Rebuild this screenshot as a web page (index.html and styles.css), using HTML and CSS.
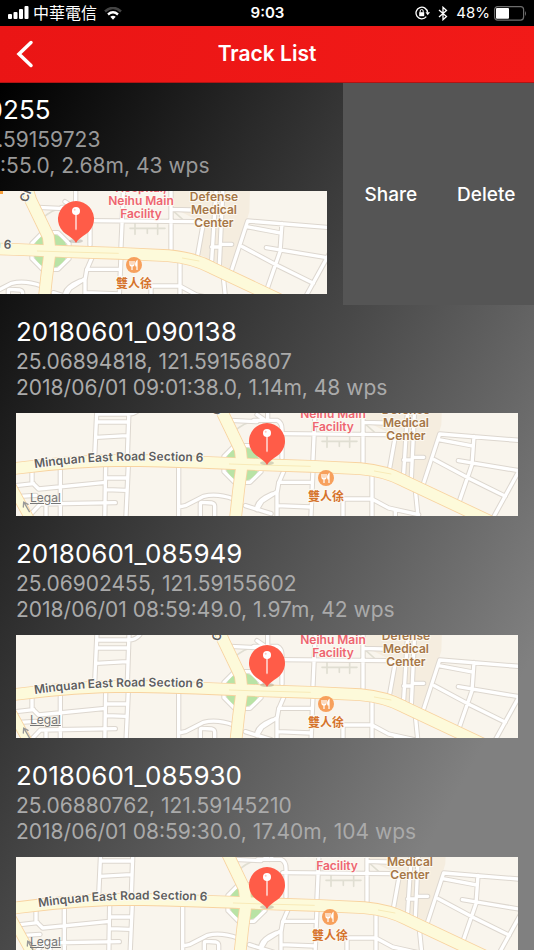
FILE: index.html
```html
<!DOCTYPE html>
<html lang="en">
<head>
<meta charset="utf-8">
<meta name="viewport" content="width=device-width, initial-scale=1">
<title>Track List</title>
<link rel="stylesheet" href="styles.css">
</head>
<body>
<svg class="defs" aria-hidden="true">
  <defs>
    <g id="roads-left">
      <path d="M291 0L283 172M387 0L381 170M384 195L376 370M291 43H385Q405 43 418 28M291 67H385M287 113L380 108M95 215V248L115 268L315 248M30 260L100 252M180 210V370M316 200L313 370M318 235H382M318 270L378 272M57 290L107 287M85 350L120 313L345 309M137 315V370M535 200V370M535 322L555 318L610 290Q650 280 700 298M600 370V312Q600 308 605 308L635 310Q643 312 643 320V370M690 62L770 66M735 318L812 342M770 320Q775 300 815 283"/>
    </g>
    <g id="roads-right">
      <path d="M-20 62H50Q65 68 65 90V175M22 0V60M-10 45L15 62M55 102L380 105L405 114M166 0L158 180M158 210L151 370M308 0V188M308 68L370 70M405 110L388 205M445 -20L430 222M465 -20L453 235M430 181H455M458 173H490M490 250L538 103L800 124M535 120L637 139M641 110L635 195L598 302M522 180L630 238L735 290M594 183L775 213M800 170L690 370M465 270L475 370M335 220V370M240 298H335L385 325L475 345M405 330V370M248 298V370M70 215L55 250L50 280V370M55 248H150M50 276L5 305L-10 330M50 318L152 322"/>
    </g>
    <g id="main-roads">
      <path d="M610 -32L620 0L673 110L678 155L668 230L657 330"/>
      <path d="M-30 170L0 166Q180 142 338 142Q560 147 733 155L883 160L1033 167Q1110 174 1163 203L1470 348"/>
    </g>
    <g id="city">
      <g transform="scale(.33333)">
        <path class="campus" d="M1041 -60H1279L1276 35L1223 210L1118 160L1138 70L1041 20Z"/>
        <path class="path-line" d="M918 85H1023M933 65V103M1001 70V103M970 85V100M1050 35L1078 60L1135 62M650 60Q690 20 730 25"/>
        <g class="road-edge">
          <use href="#roads-left" transform="translate(-47 -40)"/>
          <use href="#roads-right" transform="translate(733 -40)"/>
          <path d="M656 98H702L735 130V176L702 208H656L624 176V130Z"/>
        </g>
        <g class="road">
          <use href="#roads-left" transform="translate(-47 -40)"/>
          <use href="#roads-right" transform="translate(733 -40)"/>
        </g>
        <circle class="park" cx="679" cy="153" r="51"/>
        <path class="road" d="M656 98H702L735 130V176L702 208H656L624 176V130Z"/>
        <path class="side-edge" d="M-35 180L45 325"/>
        <path class="side" d="M-35 180L45 325"/>
        <use class="main-edge" href="#main-roads"/>
        <use class="main" href="#main-roads"/>
        <path class="median" d="M640 153L733 156L883 160M1075 174L1125 183"/>
        <path class="arrow" d="M40 296L24 268M22 282L23 267L36 274"/>
      </g>
      <path id="street-curve" fill="none" d="M19 55Q100 43 205 50"/>
      <text class="label street"><textPath href="#street-curve">Minquan East Road Section 6</textPath></text>
      <text class="label street" transform="translate(203 3) rotate(-68)">Ch</text>
      <g class="label hospital">
        <text x="317" y="-8">Hospital,</text>
        <text x="317" y="5">Neihu Main</text>
        <text x="317" y="18">Facility</text>
      </g>
      <g class="label campus-name">
        <text x="390" y="1">Defense</text>
        <text x="390" y="14">Medical</text>
        <text x="390" y="27">Center</text>
      </g>
      <circle cx="310" cy="65" r="8" fill="#f7a05c"/>
      <path d="M306 61V64Q306 66 308 66V70M310 61V64Q310 66 308 66M308 61V66M313 70V61Q311 63 312 66H313" fill="none" stroke="#fff" stroke-width="1.2"/>
      <text class="label food" x="310" y="88">雙人徐</text>
    </g>
    <g id="pin">
      <ellipse cx="251" cy="50" rx="7" ry="2" fill="#000" opacity=".15"/>
      <path d="M251 52C249 48 245 46 241 43A18 18 0 1 1 261 43C257 46 253 48 251 52Z" fill="#ff5c48"/>
      <path d="M250.400 22H251.600V38L251 39.500L250.400 38Z" fill="#fff"/>
      <circle cx="251" cy="20" r="4" fill="#fff"/>
      <circle cx="249.700" cy="18.700" r="1" fill="#ffc9c1"/>
    </g>
  </defs>
</svg>

<div class="status">
  <div class="status-left">
    <svg width="21" height="14" viewBox="0 0 21 14" fill="#fff" aria-label="Signal"><rect y="8" width="4" height="5" rx="1"/><rect x="5.500" y="6" width="4" height="7" rx="1"/><rect x="11" y="3" width="4" height="10" rx="1"/><rect x="16.500" width="4" height="13" rx="1"/></svg>
    <span class="carrier">中華電信</span>
    <svg class="wifi" width="18" height="13" viewBox="0 0 18 13" fill="none" aria-label="Wi-Fi"><path d="M1 4.500Q9-2.500 17 4.500" stroke="#444" stroke-width="2.600"/><path d="M4 7.500Q9 3.200 14 7.500" stroke="#fff" stroke-width="2.400"/><path d="M6.300 9.700Q9 7.800 11.700 9.700L9 12.700Z" fill="#fff"/></svg>
  </div>
  <time>9:03</time>
  <div class="status-right">
    <svg width="15" height="14" viewBox="0 0 15 14" fill="none" stroke="#fff" aria-label="Rotation lock"><path d="M11.300 10.700A5.800 5.800 0 1 1 12.600 6.500" stroke-width="1.300"/><path d="M10.500 6.300H15L12.700 9.300Z" fill="#fff" stroke="none"/><rect x="4.200" y="6.200" width="5" height="4" fill="#fff" stroke="none"/><path d="M5.200 6.500V5Q5.200 3.500 6.700 3.500T8.200 5V6.500"/></svg>
    <svg class="bt" width="10" height="15" viewBox="0 0 10 15" fill="none" stroke="#fff" stroke-width="1.300" aria-label="Bluetooth"><path d="M1 4L8.500 10.500L5 13.700V1.300L8.500 4.500L1 11"/></svg>
    <span class="percent">48%</span>
    <svg width="33" height="15" viewBox="0 0 33 15" aria-label="Battery"><rect x=".6" y=".6" width="29" height="13.500" rx="3" fill="none" stroke="#6d6d6d" stroke-width="1.200"/><rect x="2" y="2" width="13" height="10.700" rx="1" fill="#fff"/><path d="M31 5Q33 7.300 31 10Z" fill="#6d6d6d"/></svg>
  </div>
</div>

<header class="nav">
  <button class="back" type="button" aria-label="Back"><svg width="18" height="28" viewBox="0 0 18 28" fill="none" stroke="#fff" stroke-width="3.500" stroke-linecap="round" stroke-linejoin="miter"><path d="M15 2.500L3 14L15 25.500"/></svg></button>
  <h1>Track List</h1>
</header>

<main>
<ul class="tracks">
  <li class="row open">
    <article class="track">
      <h2>20180601_090255</h2>
      <p>25.06894818, 121.59159723</p>
      <p>2018/06/01 09:02:55.0, 2.68m, 43 wps</p>
      <div class="map">
        <svg viewBox="0 0 502 103" preserveAspectRatio="xMidYMid slice"><use href="#city" x="-1" y="9"/><path d="M175 0H178V3H175Z" fill="#f9a13c"/><use href="#pin"/></svg>
        <a class="legal" href="#legal">Legal</a>
      </div>
    </article>
    <div class="actions"><button type="button">Share</button><button type="button">Delete</button></div>
  </li>
  <li class="row">
    <article class="track">
      <h2>20180601_090138</h2>
      <p>25.06894818, 121.59156807</p>
      <p>2018/06/01 09:01:38.0, 1.14m, 48 wps</p>
      <div class="map">
        <svg viewBox="0 0 502 103" preserveAspectRatio="xMidYMid slice"><use href="#city"/><use href="#pin"/></svg>
        <a class="legal" href="#legal">Legal</a>
      </div>
    </article>
  </li>
  <li class="row">
    <article class="track">
      <h2>20180601_085949</h2>
      <p>25.06902455, 121.59155602</p>
      <p>2018/06/01 08:59:49.0, 1.97m, 42 wps</p>
      <div class="map">
        <svg viewBox="0 0 502 103" preserveAspectRatio="xMidYMid slice"><use href="#city" y="4"/><use href="#pin"/></svg>
        <a class="legal" href="#legal">Legal</a>
      </div>
    </article>
  </li>
  <li class="row">
    <article class="track">
      <h2>20180601_085930</h2>
      <p>25.06880762, 121.59145210</p>
      <p>2018/06/01 08:59:30.0, 17.40m, 104 wps</p>
      <div class="map">
        <svg viewBox="0 0 502 103" preserveAspectRatio="xMidYMid slice"><use href="#city" x="4" y="-5"/><use href="#pin"/></svg>
        <a class="legal" href="#legal">Legal</a>
      </div>
    </article>
  </li>
</ul>
</main>
</body>
</html>
```
FILE: styles.css
```css
* { box-sizing: border-box; }
body {
  margin: 0;
  height: 100vh;
  overflow: hidden;
  display: flex;
  flex-direction: column;
  background: #000;
  color: #fff;
  font-family: Inter, "Noto Sans CJK TC", sans-serif;
}
.defs { position: absolute; width: 0; height: 0; }
svg { display: block; }
button { border: 0; padding: 0; background: none; color: inherit; font: inherit; }

.status {
  flex: none;
  display: grid;
  grid-template-columns: 1fr auto 1fr;
  align-items: center;
  height: 26px;
  padding: 0 7px 0 8px;
  font-size: 16px;
  line-height: 26px;
}
.status time { font-weight: 600; font-size: 15px; }
.status-left, .status-right { display: flex; align-items: center; gap: 4px; }
.status-right { justify-content: flex-end; }
.wifi { margin-left: 3px; }
.bt { margin: 0 4px; }
.percent { font-size: 15px; }

.nav {
  flex: none;
  display: grid;
  grid-template-columns: 1fr auto 1fr;
  align-items: center;
  height: 57px;
  padding: 0 16px;
  background: linear-gradient(100deg, #ea1515, #f21a18);
  border-bottom: 1px solid #b01414;
}
.back { justify-self: start; }
h1 { margin: 0; font-size: 21px; font-weight: 600; line-height: 30px; }

main {
  flex: 1;
  min-height: 0;
  overflow: hidden;
  background: linear-gradient(119deg, #000 0, #808080 744px);
}
.tracks { margin: 0; padding: 0; list-style: none; }
.row { display: flex; justify-content: flex-end; overflow: hidden; }
.track { flex: 0 0 100%; min-width: 0; padding: 12px 16px 11px; }
h2 { margin: 0 0 2px; font-size: 26px; font-weight: 400; line-height: 30px; white-space: nowrap; }
.track p { margin: 0; font-size: 21px; line-height: 26px; color: #aaa; white-space: nowrap; }
.open p { color: #999; }
.actions { flex: none; display: flex; width: 191px; background: #555; font-size: 19px; font-weight: 500; }
.actions button { flex: 1; }

.map { position: relative; margin-top: 12px; height: 103px; overflow: hidden; background: #f9f5ed; }
.map svg { width: 100%; height: 100%; }
.legal { position: absolute; left: 14px; bottom: 10px; color: #777; font-size: 12px; line-height: 16px; text-decoration: underline; }

.road, .road-edge, .main, .main-edge, .side, .side-edge, .path-line, .median, .arrow { fill: none; stroke-linejoin: round; stroke-linecap: round; }
.road-edge { stroke: #ddd7cf; stroke-width: 16; }
.road { stroke: #fff; stroke-width: 10; }
.main-edge { stroke: #f8d3a0; stroke-width: 38; }
.main { stroke: #fdfada; stroke-width: 33; }
.side-edge { stroke: #f8d3a0; stroke-width: 30; }
.side { stroke: #fdfada; stroke-width: 25; }
.median { stroke: #f8eab8; stroke-width: 3; }
.path-line { stroke: #e0ded2; stroke-width: 5; }
.arrow { stroke: #999; stroke-width: 4; }
.campus { fill: #f5eddf; }
.park { fill: #b9e3a5; }

.label { font-size: 12px; font-weight: 600; text-anchor: middle; stroke: #fcf9f2; stroke-width: 2px; paint-order: stroke; }
.street { fill: #5f5f5f; text-anchor: start; }
.hospital { fill: #ee6570; }
.campus-name { fill: #a67748; }
.food { fill: #d5732c; }
```
